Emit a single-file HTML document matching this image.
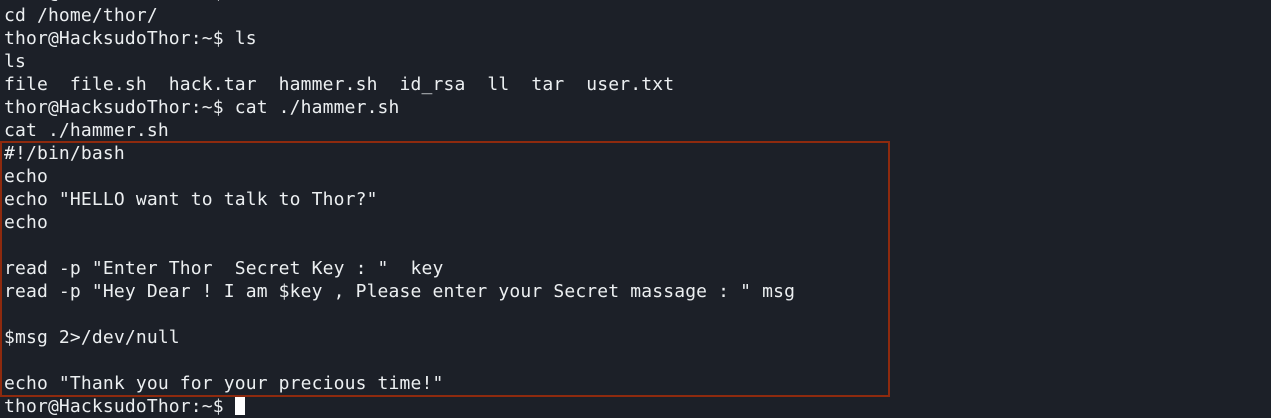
<!DOCTYPE html>
<html><head><style>
html,body{margin:0;padding:0;width:1271px;height:400px;overflow:hidden;background:#1c2028;}
pre{position:absolute;left:4px;top:-19px;margin:0;font-family:"DejaVu Sans Mono","Liberation Mono",monospace;font-size:18px;letter-spacing:0.15px;line-height:23px;color:#eceff1;}
.box{position:absolute;left:0;top:141px;width:886px;height:252px;border:2px solid #8e2a0e;}
.cur{display:inline-block;width:10px;height:18px;background:#fff;vertical-align:-3px;}
</style></head><body>
<div class="box"></div>
<pre>thor@HacksudoThor:~$ cd /home/thor/
cd /home/thor/
thor@HacksudoThor:~$ ls
ls
file  file.sh  hack.tar  hammer.sh  id_rsa  ll  tar  user.txt
thor@HacksudoThor:~$ cat ./hammer.sh
cat ./hammer.sh
#!/bin/bash
echo
echo "HELLO want to talk to Thor?"
echo

read -p "Enter Thor  Secret Key : "  key
read -p "Hey Dear ! I am $key , Please enter your Secret massage : " msg

$msg 2&gt;/dev/null

echo "Thank you for your precious time!"
thor@HacksudoThor:~$ <span class="cur"></span></pre>
</body></html>
